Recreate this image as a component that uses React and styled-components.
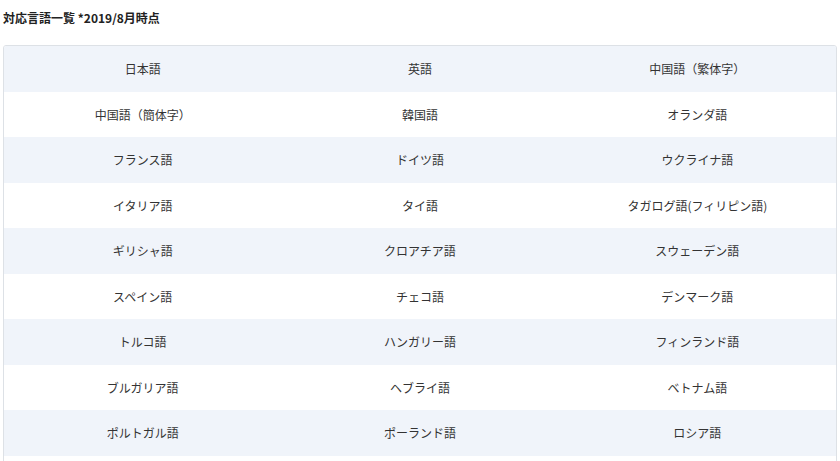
import React from 'react';
import styled, { createGlobalStyle } from 'styled-components';

const languages = [
  '日本語', '英語', '中国語（繁体字）',
  '中国語（簡体字）', '韓国語', 'オランダ語',
  'フランス語', 'ドイツ語', 'ウクライナ語',
  'イタリア語', 'タイ語', 'タガログ語(フィリピン語)',
  'ギリシャ語', 'クロアチア語', 'スウェーデン語',
  'スペイン語', 'チェコ語', 'デンマーク語',
  'トルコ語', 'ハンガリー語', 'フィンランド語',
  'ブルガリア語', 'ヘブライ語', 'ベトナム語',
  'ポルトガル語', 'ポーランド語', 'ロシア語',
  '', '', '',
];

const rows = [];
for (let i = 0; i < languages.length; i += 3) rows.push(languages.slice(i, i + 3));

const App = () => {
  return (
    <>
      <GlobalStyle />
      <Page>
        <Title>対応言語一覧 *2019/8月時点</Title>
        <Table>
          {rows.map((row, i) => (
            <Row key={i} $striped={i % 2 === 0}>
              {row.map((lang, j) => (
                <Cell key={j}>{lang}</Cell>
              ))}
            </Row>
          ))}
        </Table>
      </Page>
    </>
  );
};

export default App;

const GlobalStyle = createGlobalStyle`
  body {
    margin: 0;
    background: #fff;
    font-family: "Noto Sans CJK JP", "Noto Sans", sans-serif;
    color: #333;
  }
`;

const Page = styled.div`
  padding: 9px 3px 0 3px;
`;

const Title = styled.div`
  font-size: 12px;
  font-weight: 700;
  line-height: 18px;
  color: #222;
`;

const Table = styled.div`
  margin-top: 18px;
  border: 1px solid #dde1e6;
  border-radius: 3px;
  overflow: hidden;
`;

const Row = styled.div`
  display: grid;
  grid-template-columns: repeat(3, 1fr);
  height: 45.5px;
  background: ${(p) => (p.$striped ? '#f0f4fa' : '#fff')};
`;

const Cell = styled.div`
  display: flex;
  align-items: center;
  justify-content: center;
  font-size: 12px;
  color: #333;
`;
